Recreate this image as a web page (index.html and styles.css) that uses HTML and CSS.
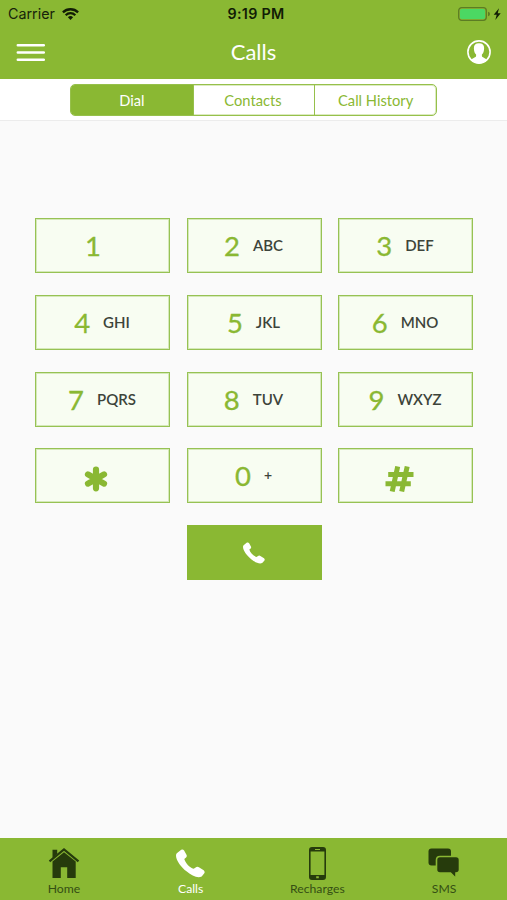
FILE: index.html
```html
<!DOCTYPE html>
<html lang="en">
<head>
<meta charset="utf-8">
<title>Calls</title>
<link rel="stylesheet" href="styles.css">
</head>
<body>
<div class="app">
  <header class="top">
    <div class="status">
      <div class="carrier"><span>Carrier</span>
        <svg width="17" height="12" viewBox="0 0 17 12" fill="none" stroke="#111c05" stroke-width="2.3"><path d="M.9 4.4a10.8 10.8 0 0 1 15.2 0M3.7 7.2a6.8 6.8 0 0 1 9.6 0"/><path d="M8.5 12 5.9 9.2a3.8 3.8 0 0 1 5.2 0z" fill="#111c05" stroke="none"/></svg>
      </div>
      <div class="time">9:19 PM</div>
      <div class="power">
        <svg width="43" height="14" viewBox="0 0 43 14"><rect x=".7" y=".7" width="27.6" height="12.6" rx="3" fill="none" stroke="#5c7c24" stroke-width="1.3"/><rect x="2" y="2" width="25" height="10" rx="1.8" fill="#4bd863"/><path d="M30 4.8q2 .5 2 2.2t-2 2.2z" fill="#5c7c24"/><path d="M41 1.2 35.7 7.7h3L37.3 13l5.4-6.8h-3z" fill="#111c05"/></svg>
      </div>
    </div>
    <div class="nav">
      <svg class="menu" width="29" height="19" viewBox="0 0 29 19" stroke="#fff" stroke-width="2.5" stroke-linecap="round"><path d="M1.8 2.2h26M1.8 9.5h26M1.8 16.8h26"/></svg>
      <h1>Calls</h1>
      <svg class="user" width="24" height="24" viewBox="0 0 24 24"><circle cx="12" cy="12" r="11.1" fill="none" stroke="#fff" stroke-width="1.6"/><path d="M12 3.200c-3.700 0-5.300 2.200-5.100 5.300.1 2.900.8 4.800 2.200 6v1.500c0 1.500-3.500 1.800-5.300 4.100 4 4.400 12.400 4.400 16.400 0-1.800-2.300-5.300-2.600-5.300-4.100v-1.500c1.400-1.200 2.100-3.100 2.200-6 .2-3.100-1.400-5.300-5.100-5.300z" fill="#fff"/></svg>
    </div>
  </header>
  <div class="tabs"><div class="segments">
    <div class="segment active">Dial</div><div class="segment">Contacts</div><div class="segment">Call History</div>
  </div></div>
  <main>
    <div class="keypad">
      <div class="key"><b>1</b><span></span></div>
      <div class="key"><b>2</b><span>ABC</span></div>
      <div class="key"><b>3</b><span>DEF</span></div>
      <div class="key"><b>4</b><span>GHI</span></div>
      <div class="key"><b>5</b><span>JKL</span></div>
      <div class="key"><b>6</b><span>MNO</span></div>
      <div class="key"><b>7</b><span>PQRS</span></div>
      <div class="key"><b>8</b><span>TUV</span></div>
      <div class="key"><b>9</b><span>WXYZ</span></div>
      <div class="key symbol"><svg width="24" height="26" viewBox="0 0 24 26" stroke="#8ab833" stroke-width="6.2" stroke-linecap="round"><path d="M12 3.700v18.600M4 8.400l16 9.200M20 8.400 4 17.600"/></svg></div>
      <div class="key"><b>0</b><span class="plus">+</span></div>
      <div class="key symbol"><svg width="29" height="26" viewBox="0 0 29 26" stroke="#8ab833" stroke-width="5"><path d="M12.700.5 7.200 25.500M22.200.5l-5.500 25M3.200 8.500h25.300M.5 17.800h25.300"/></svg></div>
      <div class="call"><svg width="22" height="22" viewBox="0 0 29 29"><path d="M.8 4.200 5.200.8q1.800-.8 2.900.8l2.500 4.500q.6 1.600-.8 2.700L8.300 9.900c1.200 4.100 5 8.300 9.400 9.900l2.700-1.700q1.300-.6 2.500.2l4.800 3q1.500 1.500.6 3l-2.600 3.200c-3.900 2-9.900-.5-14.900-4.900C5.200 18.300.2 11.600 0 6.700q0-1.700.8-2.500z" fill="#fff"/></svg></div>
    </div>
  </main>
  <footer>
    <div class="item"><svg width="32" height="32" viewBox="0 0 32 32"><path d="M4.500 2.800h4.700V7L4.500 11z"/><path d="M1.500 14.300 16 2.400l14.500 11.900" fill="none" stroke="#263b0c" stroke-width="2.200"/><path d="M4.500 14.500 16 5.300l11.700 9.200V31h-8.500V20.200h-6.400V31H4.500z"/></svg><span>Home</span></div>
    <div class="item on"><svg width="29" height="29" viewBox="0 0 29 29"><path d="M.8 4.200 5.200.8q1.800-.8 2.900.8l2.500 4.500q.6 1.600-.8 2.700L8.300 9.900c1.200 4.100 5 8.300 9.400 9.900l2.700-1.700q1.300-.6 2.500.2l4.800 3q1.500 1.500.6 3l-2.600 3.200c-3.900 2-9.900-.5-14.900-4.900C5.200 18.300.2 11.600 0 6.700q0-1.700.8-2.500z"/></svg><span>Calls</span></div>
    <div class="item"><svg width="17" height="33" viewBox="0 0 17 33"><path fill-rule="evenodd" d="M3 0h11q3 0 3 3v27q0 3-3 3H3q-3 0-3-3V3Q0 0 3 0zM1.600 4.500v23.500h13.800V4.500zM6 1.900v1h5v-1zM7.200 29.300v1.900h2.600v-1.900z"/></svg><span>Recharges</span></div>
    <div class="item"><svg width="32" height="31" viewBox="0 0 32 31"><rect x=".5" y=".5" width="22.500" height="17" rx="3"/><path d="M12 8.500h16q3.500 0 3.500 3.500v9.500q0 3.500-3.500 3.500V30.500L22.500 25H12q-3.500 0-3.500-3.500V12Q8.500 8.500 12 8.500z" stroke="#8ab833" stroke-width="1.600"/></svg><span>SMS</span></div>
  </footer>
</div>
</body>
</html>
```

FILE: styles.css
```css
* { box-sizing: border-box; }
body { margin: 0; background: #fafafa; font-family: Lato, "Liberation Sans", sans-serif; }
svg { display: block; }
.app { width: 507px; height: 900px; display: flex; flex-direction: column; }
.top { height: 79px; background: #8ab833; flex: none; }
.status { height: 27px; padding: 0 6px 0 8px; display: grid; grid-template-columns: 1fr auto 1fr; align-items: center; font: 14.3px Inter, sans-serif; color: #17230a; }
.carrier { display: flex; align-items: center; gap: 7px; }
.time { font-weight: 600; font-size: 14.300px; letter-spacing: .3px; padding-left: 3px; color: #111c05; }
.power { display: flex; justify-content: flex-end; }
.nav { height: 50px; padding: 1px 16px 0; display: grid; grid-template-columns: 1fr auto 1fr; align-items: center; color: #fff; }
.nav h1 { margin: -1px 0 0; font-size: 22px; line-height: 30px; font-weight: 400; }
.user { justify-self: end; margin-top: -1px; }
.tabs { height: 42px; flex: none; background: #fff; border-bottom: 1px solid #ececec; display: flex; justify-content: center; padding-top: 5px; }
.segments { width: 367px; height: 32px; border: 1px solid #96c04b; box-shadow: inset 0 0 0 1px #dcebc1; border-radius: 5px; display: grid; grid-template-columns: repeat(3, 1fr); overflow: hidden; }
.segment { display: flex; align-items: center; justify-content: center; font-size: 14.700px; color: #8ab833; }
.segment + .segment { border-left: 1px solid #96c04b; }
.segment:nth-child(2) { padding-right: 2px; }
.segment.active { background: #8ab833; color: #fff; }
main { flex: 1; padding: 97px 34px 0 35px; }
.keypad { display: grid; grid-template-columns: repeat(3, 135px); grid-auto-rows: 55px; row-gap: 21.750px; justify-content: space-between; }
.key { border: 1px solid #97c254; box-shadow: inset 0 0 0 1px #d5e9b9; background: #f8fdf2; display: flex; align-items: center; justify-content: center; gap: 13px; padding-right: 1px; }
.key b { font-weight: 400; font-size: 27.500px; line-height: 34px; color: #8ab833; padding-top: 1px; -webkit-text-stroke: .3px #8ab833; }
.key span { min-width: 5px; font-size: 15px; font-weight: 600; line-height: 18px; color: #3d443a; padding-bottom: 1px; }
.key .plus { font-size: 14px; }
.key.symbol { padding: 7px 13px 0 0; }
.call { grid-column: 2; background: #8ab833; display: flex; align-items: center; justify-content: center; }
footer { height: 62px; flex: none; background: #8ab833; display: grid; grid-template-columns: repeat(4, 1fr); }
.item { display: grid; grid-template-rows: 36px 16px; padding: 7px 0 0 1px; align-items: center; justify-items: center; font-size: 12.200px; line-height: 16px; color: #354f13; fill: #263b0c; }
.item.on { color: #fff; fill: #fff; }
```
